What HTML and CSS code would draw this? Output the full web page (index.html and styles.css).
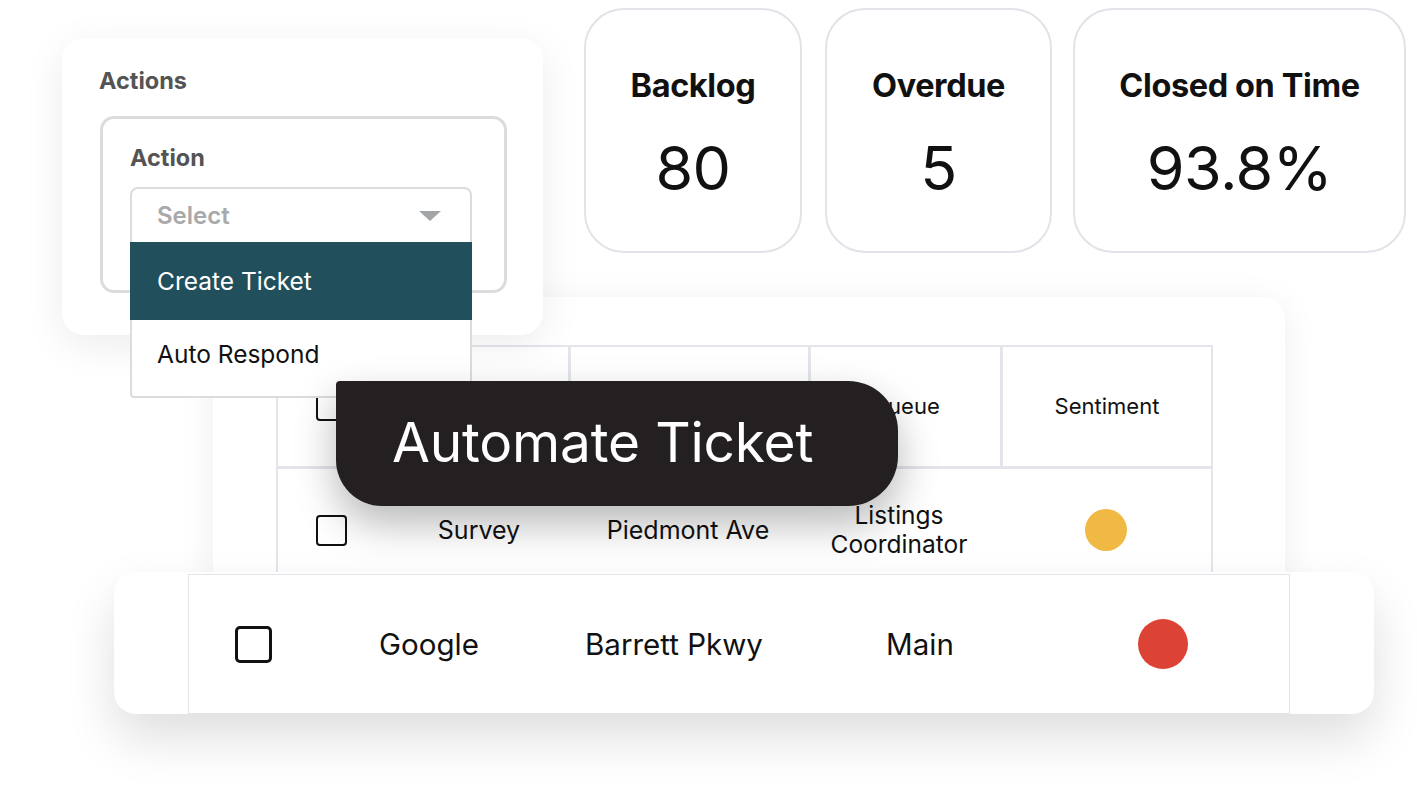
FILE: index.html
```html
<!DOCTYPE html>
<html lang="en">
<head>
  <meta charset="UTF-8" />
  <meta name="viewport" content="width=device-width, initial-scale=1.0"/>
  <title>Automate Ticket</title>
  <link rel="stylesheet" href="styles.css">
</head>
<body>
  <div class="stage">

    <div class="table-card">
      <div class="ticket-table">
        <div class="head-row">
          <div class="cell first"><span class="check"></span></div>
          <div class="cell"></div>
          <div class="cell">Queue</div>
          <div class="cell">Sentiment</div>
        </div>
        <div class="data-row">
          <div class="cell"><span class="check"></span></div>
          <div class="cell">Survey</div>
          <div class="cell">Piedmont Ave</div>
          <div class="cell two-line"><span>Listings</span><span>Coordinator</span></div>
          <div class="cell"><span class="dot yellow"></span></div>
        </div>
      </div>
    </div>

    <div class="row-card">
      <div class="row-inner">
        <div class="cell"><span class="check big"></span></div>
        <div class="cell">Google</div>
        <div class="cell">Barrett Pkwy</div>
        <div class="cell">Main</div>
        <div class="cell"><span class="dot red"></span></div>
      </div>
    </div>

    <div class="actions-card">
      <h3>Actions</h3>
      <div class="action-box">
        <h4>Action</h4>
        <div class="select">
          <div class="select-head">
            <span>Select</span>
            <span class="caret"></span>
          </div>
          <div class="option active">Create Ticket</div>
          <div class="option last">Auto Respond</div>
        </div>
      </div>
    </div>

    <div class="stats">
      <div class="stat backlog">
        <div class="stat-title">Backlog</div>
        <div class="stat-value">80</div>
      </div>
      <div class="stat overdue">
        <div class="stat-title">Overdue</div>
        <div class="stat-value">5</div>
      </div>
      <div class="stat closed">
        <div class="stat-title">Closed on Time</div>
        <div class="stat-value">93.8%</div>
      </div>
    </div>

    <div class="pill">Automate Ticket</div>

  </div>
</body>
</html>
```

FILE: styles.css
```css
* {margin: 0; padding: 0; box-sizing: border-box; font-family: 'Inter', 'Noto Sans', sans-serif;}
body {
  background: #ffffff;
  color: #111111;
}
.stage {
  position: relative;
  width: 1417px;
  height: 790px;
  overflow: hidden;
}

/* actions card */
.actions-card {
  position: absolute;
  left: 62px;
  top: 38px;
  width: 481px;
  height: 297px;
  background: #fff;
  border-radius: 22px;
  box-shadow: 0 10px 40px rgba(0, 0, 0, 0.08);
  padding: 29px 0 0 37px;
  z-index: 3;
}
.actions-card h3 {
  font-size: 23.5px;
  line-height: 28px;
  font-weight: 700;
  color: #545454;
}
.action-box {
  margin-top: 21px;
  margin-left: 1px;
  width: 407px;
  height: 177px;
  border: 3px solid #dcdcdc;
  border-radius: 14px;
  padding: 25px 0 0 27px;
}
.action-box h4 {
  font-size: 23.5px;
  line-height: 28px;
  font-weight: 700;
  color: #545454;
}
.select {
  margin-top: 15px;
  width: 342px;
  background: #fff;
  border: 2px solid #dcdcdc;
  border-radius: 8px 8px 4px 4px;
  position: relative;
  z-index: 5;
}
.select-head {
  height: 53px;
  display: flex;
  align-items: center;
  justify-content: space-between;
  padding: 0 29px 0 25px;
  font-size: 24px;
  font-weight: 600;
  color: #a9a9a9;
}
.caret {
  width: 0;
  height: 0;
  border-left: 11px solid transparent;
  border-right: 11px solid transparent;
  border-top: 10px solid #a3a6a8;
}
.option {
  height: 78px;
  display: flex;
  align-items: center;
  padding-left: 25px;
  font-size: 24.5px;
  color: #111;
}
.option.active {
  background: #224f5c;
  color: #ffffff;
  margin: 0 -2px;
  padding-left: 27px;
}
.option.last {
  height: 76px;
  padding-bottom: 8px;
}

/* stat cards */
.stats {
  position: absolute;
  left: 584px;
  top: 8px;
  display: flex;
  gap: 23px;
}
.stat {
  height: 245px;
  border: 2px solid #e2e2e9;
  border-radius: 40px;
  background: #fff;
  text-align: center;
  padding-top: 57px;
}
.backlog { width: 218px; }
.overdue { width: 227px; margin-right: -2px; }
.closed { width: 333px; }
.stat-title {
  font-size: 32.5px;
  line-height: 38px;
  font-weight: 700;
  letter-spacing: -0.4px;
}
.stat-value {
  margin-top: 26px;
  font-size: 61px;
  line-height: 74px;
  font-weight: 400;
  letter-spacing: -0.5px;
}

/* table card */
.table-card {
  position: absolute;
  left: 213px;
  top: 297px;
  width: 1072px;
  height: 300px;
  background: #fff;
  border-radius: 22px;
  box-shadow: 0 6px 36px rgba(0, 0, 0, 0.07);
  padding: 48px 0 0 63px;
  z-index: 1;
}
.ticket-table {
  width: 937px;
  border-left: 2px solid #e4e4ec;
  border-right: 2px solid #e4e4ec;
}
.head-row {
  display: grid;
  grid-template-columns: 290px 240px 192px 1fr;
  height: 124px;
  border-top: 2px solid #e4e4ec;
  border-bottom: 3px solid #e4e4ec;
}
.head-row .cell {
  display: flex;
  align-items: center;
  justify-content: center;
  font-size: 22px;
  border-left: 3px solid #e4e4ec;
  padding-bottom: 2px;
}
.head-row .cell.first {
  border-left: none;
  justify-content: flex-start;
  padding-left: 38px;
}
.data-row {
  display: grid;
  grid-template-columns: 112px 178px 240px 192px 1fr;
  height: 122px;
}
.data-row .cell {
  display: flex;
  align-items: center;
  justify-content: center;
  text-align: center;
  font-size: 25px;
}
.data-row .cell.two-line {
  flex-direction: column;
  font-size: 24.5px;
  line-height: 29px;
  padding-right: 10px;
}
.data-row .cell:first-child {
  justify-content: flex-start;
  padding-left: 38px;
}
.check {
  display: inline-block;
  width: 31px;
  height: 31px;
  border: 2px solid #111;
  border-radius: 4px;
  flex-shrink: 0;
}
.check.big {
  width: 37px;
  height: 37px;
  border-width: 3px;
  border-radius: 5px;
}
.dot {
  display: inline-block;
  border-radius: 50%;
}
.dot.yellow {
  width: 42px;
  height: 42px;
  background: #f0b944;
}
.dot.red {
  width: 50px;
  height: 50px;
  background: #dc4334;
}

/* bottom row card */
.row-card {
  position: absolute;
  left: 114px;
  top: 572px;
  width: 1260px;
  height: 142px;
  background: #fff;
  border-radius: 22px;
  box-shadow: 0 24px 50px rgba(0, 0, 0, 0.13);
  padding: 2px 0 0 74px;
  z-index: 2;
}
.row-inner {
  width: 1102px;
  height: 140px;
  border: 1.5px solid #e3e3ea;
  display: grid;
  grid-template-columns: 117px 246px 244px 248px 1fr;
}
.row-inner .cell {
  display: flex;
  align-items: center;
  justify-content: center;
  font-size: 29.5px;
}
.row-inner .cell:first-child {
  justify-content: flex-start;
  padding-left: 46px;
}
.row-inner .cell:last-child {
  padding-right: 7px;
}

/* floating pill */
.pill {
  position: absolute;
  left: 336px;
  top: 381px;
  width: 562px;
  height: 125px;
  background: #242021;
  color: #fff;
  border-radius: 4px 50px 50px 46px;
  box-shadow: 0 18px 40px rgba(0, 0, 0, 0.28);
  display: flex;
  align-items: center;
  padding: 0 0 4px 56px;
  font-size: 55px;
  font-weight: 400;
  letter-spacing: -0.2px;
  z-index: 6;
}
```
